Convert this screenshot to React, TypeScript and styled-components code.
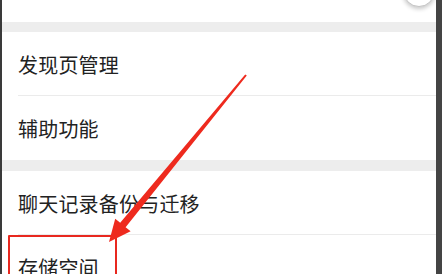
import styled, { createGlobalStyle } from "styled-components";

const GlobalStyle = createGlobalStyle`
  html, body {
    margin: 0;
    padding: 0;
    background: #ffffff;
  }
  body {
    font-family: "Noto Sans CJK SC", "Noto Sans", sans-serif;
  }
`;

const Screen = styled.div`
  position: relative;
  width: 442px;
  height: 274px;
  overflow: hidden;
  display: flex;
  background: #3e3e3e;
`;

const LeftEdge = styled.div`
  width: 2px;
  background: #3a3a3a;
`;

const RightEdge = styled.div`
  width: 6px;
  background: #444444;
`;

const List = styled.div`
  flex: 1;
  display: flex;
  flex-direction: column;
  background: #ededed;
  overflow: hidden;
`;

const TopSection = styled.div`
  height: 22px;
  flex-shrink: 0;
  background: #ffffff;
  overflow: hidden;
  display: flex;
  justify-content: flex-end;
  align-items: flex-end;
  padding-right: 1px;
`;

const Knob = styled.div`
  width: 30px;
  height: 30px;
  margin-bottom: 15px;
  border-radius: 50%;
  background: #ffffff;
  border: 1.5px solid #c4c4c4;
  box-shadow: 0 2px 4px rgba(0, 0, 0, 0.22);
  flex-shrink: 0;
`;

const Gap = styled.div<{ $h: number }>`
  height: ${(p) => p.$h}px;
  flex-shrink: 0;
  background: #ededed;
`;

const Section = styled.div`
  background: #ffffff;
  display: flex;
  flex-direction: column;
  flex-shrink: 0;
`;

const Row = styled.div<{ $divider?: boolean }>`
  height: 64px;
  display: flex;
  align-items: center;
  padding-left: 16px;
  flex-shrink: 0;
  position: relative;
  ${(p) =>
    p.$divider
      ? `&::after {
    content: "";
    position: absolute;
    left: 16px;
    right: 0;
    bottom: 0;
    height: 1px;
    background: #ebebeb;
  }`
      : ""}
`;

const Label = styled.span`
  font-size: 20px;
  color: #222222;
  letter-spacing: 0.2px;
`;

const Highlight = styled.div`
  position: absolute;
  left: 8px;
  top: 235px;
  width: 105px;
  height: 60px;
  border: 2px solid #e8281f;
  border-radius: 1px;
`;

const Overlay = styled.svg`
  position: absolute;
  left: 0;
  top: 0;
  pointer-events: none;
`;

export default function App() {
  return (
    <>
      <GlobalStyle />
      <Screen>
        <LeftEdge />
        <List>
          <TopSection>
            <Knob />
          </TopSection>
          <Gap $h={10} />
          <Section>
            <Row $divider>
              <Label>发现页管理</Label>
            </Row>
            <Row>
              <Label>辅助功能</Label>
            </Row>
          </Section>
          <Gap $h={11} />
          <Section>
            <Row $divider>
              <Label>聊天记录备份与迁移</Label>
            </Row>
            <Row>
              <Label>存储空间</Label>
            </Row>
          </Section>
        </List>
        <RightEdge />
        <Highlight />
        <Overlay width="442" height="274" viewBox="0 0 442 274">
          <polygon
            points="246.8,75.6 245.2,74.4 120.2,222.8 115.2,218.7 109,242 130.6,231.3 125.6,227.2"
            fill="#ee2a1e"
          />
        </Overlay>
      </Screen>
    </>
  );
}
